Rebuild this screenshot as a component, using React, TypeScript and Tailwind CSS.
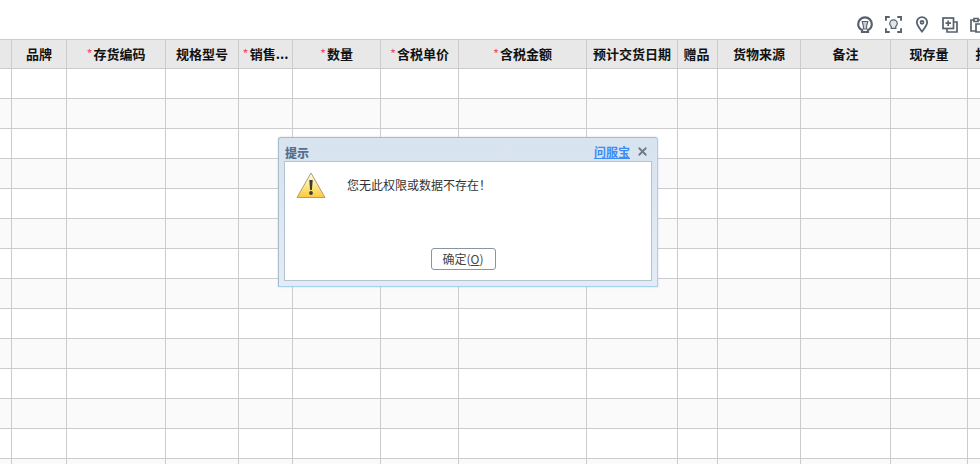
import { X } from 'lucide-react';

const gridCols = 'grid-cols-[12px_55px_99px_73px_54px_88px_78px_128px_91px_40px_83px_90px_77px_42px]';

const columns = [
  { name: '' },
  { name: '品牌' },
  { name: '存货编码', required: true },
  { name: '规格型号' },
  { name: '销售...', required: true },
  { name: '数量', required: true },
  { name: '含税单价', required: true },
  { name: '含税金额', required: true },
  { name: '预计交货日期' },
  { name: '赠品', pull: true },
  { name: '货物来源' },
  { name: '备注' },
  { name: '现存量' },
  { name: '报价' },
];

const rows = Array.from({ length: 14 }, (_, i) => i);

const iconColor = '#56626e';

const Toolbar = () => (
  <div className="h-[39px] flex items-end justify-end gap-[11px] pb-[6px] overflow-hidden">
    {/* bulb */}
    <svg width="16" height="17" viewBox="1 0 16 17" fill="none" stroke={iconColor} strokeWidth="2.2">
      <path d="M6 14 C3.4 12.6 2.2 10.8 2.2 8.2 a6.8 6.8 0 0 1 13.6 0 C15.8 10.8 14.6 12.6 12 14 V16 H6 Z" />
      <path d="M6.2 5.5 h5.6 l-1.2 4.5 v3 h-3.2 v-3 z" strokeWidth="1.1" fill="#c9ced3" />
    </svg>
    {/* scan bulb */}
    <svg width="17" height="17" viewBox="0 0 18 18" fill="none" stroke={iconColor} strokeWidth="2" className="ml-[1px]">
      <path d="M1 5 V1 H5 M13 1 H17 V5 M17 13 V17 H13 M5 17 H1 V13" />
      <path d="M6.6 11 C5.6 10.2 5 9.2 5 8 a4 4 0 0 1 8 0 C13 9.2 12.4 10.2 11.4 11 V13 H6.6 Z" strokeWidth="1.3" fill="#e3e6e9" />
    </svg>
    {/* pin */}
    <svg width="14" height="17" viewBox="0 0 14 18" fill="none" stroke={iconColor} strokeWidth="1.9" className="ml-[2px]">
      <path d="M7 16.5 C4 12.5 1.5 9.8 1.5 6.7 a5.5 5.5 0 0 1 11 0 C12.5 9.8 10 12.5 7 16.5 Z" />
      <circle cx="7" cy="6.7" r="1.6" />
    </svg>
    {/* add copy */}
    <svg width="16" height="16" viewBox="0 0 16 16" fill="none" stroke={iconColor} strokeWidth="1.7" className="ml-[2px]">
      <path d="M11.5 5 H15 V15 H5 V11.5" />
      <rect x="1" y="1" width="10.5" height="10.5" fill="white" />
      <path d="M6.2 3.5 V9 M3.5 6.2 H9" />
    </svg>
    {/* paste, cut by the window edge */}
    <svg width="16" height="16" viewBox="0 0 16 16" fill="none" stroke={iconColor} strokeWidth="1.7" className="mr-[-5px] shrink-0">
      <path d="M2 3 H12 V14 H2 Z" />
      <path d="M5 1.5 H9 V4.5 H5 Z" fill="white" />
      <path d="M7 7 H15 V15 H7 Z" fill="white" />
    </svg>
  </div>
);

const Sheet = () => (
  <div className="w-[1040px] border-t border-[#cccccc]">
    <div className={`grid ${gridCols} h-[29px] bg-[#e8e8e8] border-b border-[#cccccc]`}>
      {columns.map((col, i) => (
        <div
          key={i}
          className={`border-r border-[#cccccc] flex items-center justify-center text-[13px] font-bold text-[#111111] whitespace-nowrap overflow-hidden ${col.pull ? 'pr-[2px]' : ''}`}
        >
          {col.required && <span className="text-[#f0506e] font-normal mr-[1px]">*</span>}
          {col.name}
        </div>
      ))}
    </div>
    {rows.map((row) => (
      <div
        key={row}
        className={`grid ${gridCols} h-[30px] border-b border-[#cccccc] ${row % 2 === 1 ? 'bg-[#fafafa]' : 'bg-white'}`}
      >
        {columns.map((_, i) => (
          <div key={i} className="border-r border-[#cccccc]" />
        ))}
      </div>
    ))}
  </div>
);

const WarningIcon = () => (
  <svg width="30" height="27" viewBox="0 0 30 27">
    <defs>
      <linearGradient id="warn" x1="0" y1="0" x2="0" y2="1">
        <stop offset="0" stopColor="#fffbe6" />
        <stop offset="0.5" stopColor="#fdeb8c" />
        <stop offset="1" stopColor="#fdc93a" />
      </linearGradient>
    </defs>
    <path d="M15 1 L29 25.5 H1 Z" fill="url(#warn)" stroke="#b49a78" strokeWidth="1" strokeLinejoin="round" />
    <path d="M13.3 8 H16.7 L15.9 18 H14.1 Z" fill="#3c3c3c" />
    <circle cx="15" cy="21" r="1.9" fill="#3c3c3c" />
  </svg>
);

const Dialog = () => (
  <div className="absolute left-[278px] top-[137px] w-[380px] h-[150px] flex flex-col rounded-t-[3px] border border-[#a9bccb] border-b-[#a5d3ee] border-r-[#a5d3ee] px-[5px] pb-[5px] bg-gradient-to-b from-[#d7e3ef] to-[#e4ebf6] shadow-[0_0_2px_rgba(120,150,180,0.4)]">
    <div className="h-[23px] shrink-0 flex items-center justify-between pt-[6px] pl-[1px]">
      <span className="text-[12px] font-black text-[#54708f]">提示</span>
      <div className="flex items-center gap-[6px] pr-[3px] mt-[-2px]">
        <a className="text-[12px] font-bold text-[#3d8bf8] underline">问服宝</a>
        <X size={13} strokeWidth={3.4} className="text-[#6f7b88]" />
      </div>
    </div>
    <div className="flex-1 bg-white border border-[#b4c3d1] flex flex-col">
      <div className="flex-1 flex items-start pl-[11px] pt-[10px]">
        <WarningIcon />
        <span className="ml-[21px] mt-[4px] text-[12px] text-[#333333]">您无此权限或数据不存在！</span>
      </div>
      <div className="flex justify-center pb-[10px] pr-[10px]">
        <button className="w-[65px] h-[22px] rounded-[3px] border border-[#8a94a3] bg-white text-[12px] text-[#444444] flex items-center justify-center">
          确定(<span className="underline">O</span>)
        </button>
      </div>
    </div>
  </div>
);

export default function App() {
  return (
    <div className="relative w-[980px] h-[464px] overflow-hidden bg-white font-['Noto_Sans_CJK_SC','Noto_Sans',sans-serif]">
      <Toolbar />
      <Sheet />
      <Dialog />
    </div>
  );
}
